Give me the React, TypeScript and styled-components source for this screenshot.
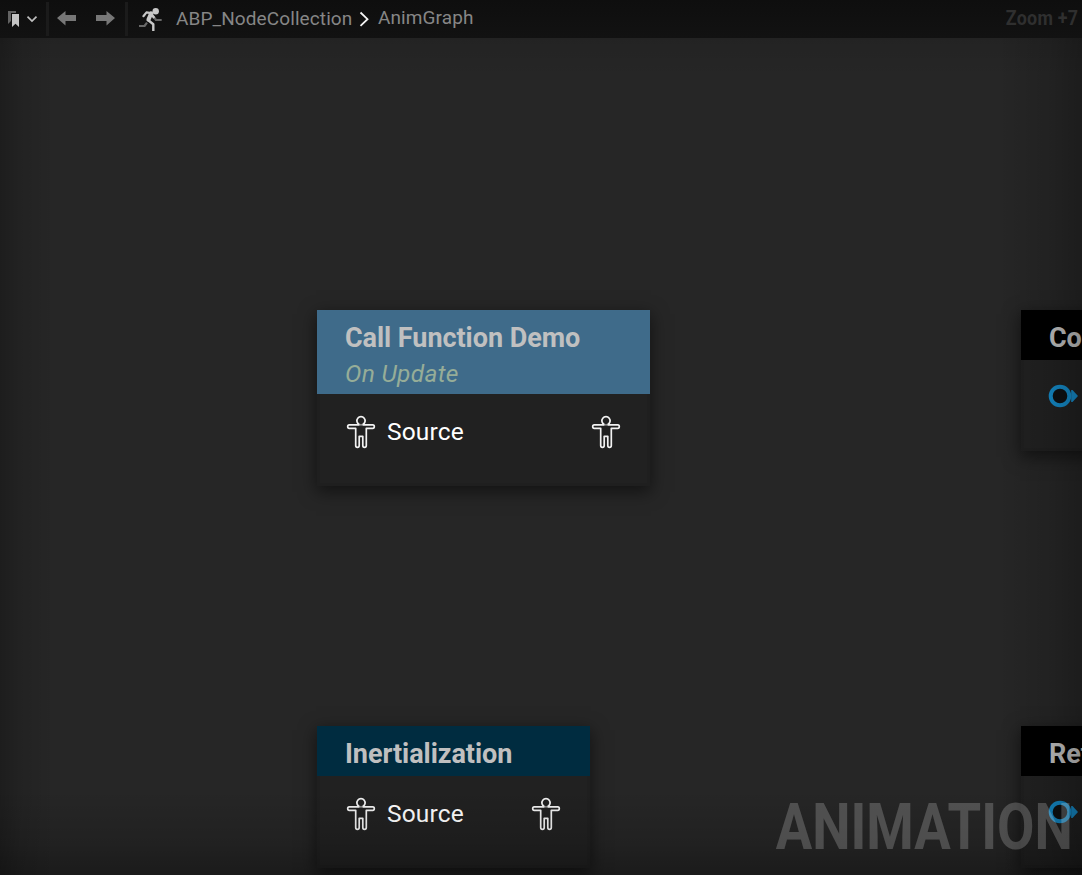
import React from "react";
import styled, { createGlobalStyle } from "styled-components";

const GlobalStyle = createGlobalStyle`
  * { box-sizing: border-box; }
  body { margin: 0; background: #262626; overflow: hidden; }
`;

const Editor = styled.div`
  position: relative;
  display: flex;
  flex-direction: column;
  width: 1082px;
  height: 875px;
  overflow: hidden;
  background: #262626;
  font-family: Roboto, "Liberation Sans", sans-serif;
`;

const TitleBar = styled.header`
  display: flex;
  align-items: center;
  height: 38px;
  flex: none;
  background: linear-gradient(#0e0e0e, #121212);
  color: #868686;
  font-size: 19px;
  line-height: 36px;
`;

const BookmarkButton = styled.div`
  display: flex;
  align-items: center;
  width: 46px;
  height: 38px;
  flex: none;
`;

const Divider = styled.div`
  width: 3px;
  height: 34px;
  flex: none;
  background: #1b1b1b;
`;

const History = styled.div`
  display: flex;
  gap: 20px;
  width: 76px;
  padding-left: 8px;
  flex: none;
`;

const Crumbs = styled.nav`
  display: flex;
  align-items: center;
  padding-left: 10px;
  height: 38px;
`;

const Crumb = styled.span<{ $width: number; $indent?: number; $lift?: number }>`
  width: ${(p) => p.$width}px;
  padding-left: ${(p) => p.$indent ?? 0}px;
  padding-bottom: ${(p) => p.$lift ?? 0}px;
  letter-spacing: 0.1px;
  white-space: nowrap;
`;

const ZoomLabel = styled.span`
  margin-left: auto;
  padding-right: 4px;
  font-weight: 700;
  font-size: 20.5px;
  line-height: 35px;
  height: 37px;
  letter-spacing: 0.3px;
  color: #2f2f2f;
  transform: scaleX(0.87);
  transform-origin: calc(100% - 4px) 50%;
`;

const Canvas = styled.main`
  position: relative;
  flex: 1;
  overflow: hidden;
`;

const Node = styled.section<{ $x: number; $y: number; $w: number; $h: number }>`
  position: absolute;
  left: ${(p) => p.$x}px;
  top: ${(p) => p.$y}px;
  width: ${(p) => p.$w}px;
  height: ${(p) => p.$h}px;
  background: #212121;
  border: 3px solid #1f1f1f;
  border-top: 0;
  box-shadow: 0 5px 16px 1px rgba(0, 0, 0, 0.5);
`;

const NodeHeader = styled.div<{ $color: string; $h: number }>`
  height: ${(p) => p.$h}px;
  margin: 0 -3px;
  padding: 10px 0 0 28px;
  background: ${(p) => p.$color};
  overflow: hidden;
  white-space: nowrap;
`;

const NodeTitle = styled.div`
  font-weight: 700;
  font-size: 27px;
  line-height: 36px;
  letter-spacing: -0.05px;
  color: #c0c0c0;
`;

const NodeSubtitle = styled.div`
  font-style: italic;
  font-size: 24.5px;
  line-height: 36px;
  letter-spacing: 0.3px;
  color: #96ad98;
`;

const PinRow = styled.div<{ $top?: number; $inset?: number }>`
  display: flex;
  align-items: center;
  height: 34px;
  margin-top: ${(p) => p.$top ?? 21}px;
  padding: 0 26px 0 ${(p) => p.$inset ?? 26}px;
`;

const PinName = styled.span`
  flex: 1;
  padding-left: 11px;
  font-size: 24.5px;
  line-height: 34px;
  letter-spacing: 0.15px;
  color: #fff;
`;

const Vignette = styled.div`
  position: absolute;
  inset: 0;
  pointer-events: none;
  background:
    linear-gradient(to right, rgba(0, 0, 0, 0.24), rgba(0, 0, 0, 0.1) 20px, transparent 55px),
    linear-gradient(to left, rgba(0, 0, 0, 0.26), rgba(0, 0, 0, 0.12) 32px, transparent 85px),
    linear-gradient(to top, rgba(0, 0, 0, 0.3), rgba(0, 0, 0, 0.13) 32px, transparent 85px),
    linear-gradient(to bottom, rgba(0, 0, 0, 0.08), transparent 40px);
`;

const Watermark = styled.div`
  position: absolute;
  right: 9px;
  bottom: 10px;
  font-weight: 700;
  font-size: 65px;
  line-height: 76px;
  color: rgba(255, 255, 255, 0.2);
  transform: scaleX(0.835);
  transform-origin: 100% 50%;
`;

const PoseIcon = () => (
  <svg width="30" height="34" viewBox="0 0 30 34" fill="none" stroke="#f2f2f2" strokeWidth="1.7" strokeLinejoin="round">
    <path d="M13.3 9.5A4.1 4.1 0 1 1 16.7 9.5" />
    <path d="M13.3 9.8H3.2C1.2 9.8 1.2 13.3 3.2 13.3H9.7V30.5C9.7 32.9 13.2 32.9 13.2 30.5V21.3H16.8V30.5C16.8 32.9 20.3 32.9 20.3 30.5V13.3H26.8C28.8 13.3 28.8 9.8 26.8 9.8H16.7" />
    <path d="M13 9.8H17" strokeOpacity=".5" />
  </svg>
);

const ValuePin = () => (
  <svg width="30" height="24" viewBox="0 0 30 24">
    <circle cx="12" cy="12" r="9.3" fill="#0e1114" stroke="#148ac8" strokeWidth="4" />
    <path d="M23.2 6L24.5 6L30 12L24.5 18H23.2Z" fill="#148ac8" />
  </svg>
);

const BookmarkIcon = () => (
  <svg width="46" height="38" viewBox="0 0 46 38" fill="none">
    <path d="M8 11H16V13H11V21L8 24Z" fill="#626262" />
    <path d="M12 14H19V27L15.5 23.7L12 27Z" fill="#c4c4c4" />
    <path d="M27.5 16.7L32 21L36.5 16.7" stroke="#c0c0c0" strokeWidth="1.7" />
  </svg>
);

const ArrowIcon = ({ flip }: { flip?: boolean }) => (
  <svg width="19" height="16" viewBox="0 0 19 16">
    <path
      transform={flip ? "matrix(-1 0 0 1 19 0)" : undefined}
      d="M0 7L8.5 0V4H19V10H8.5V14.5Z"
      fill="#777"
    />
  </svg>
);

const RunnerIcon = () => (
  <svg width="26" height="26" viewBox="0 0 26 26" fill="none" strokeLinejoin="round">
    <path d="M1 20H6.5L9 16.7M15.5 10.5L18 14H23.7" stroke="#686868" strokeWidth="2.2" />
    <path d="M5.4 10.2L8.5 6.4L13 7.2" stroke="#c8c8c8" strokeWidth="2.2" strokeLinecap="round" />
    <path d="M13.2 7.4L10.5 13.5" stroke="#c8c8c8" strokeWidth="4.2" strokeLinecap="round" />
    <path d="M10 14L15.3 18.3V25M13.5 8L16.2 12" stroke="#c8c8c8" strokeWidth="2.4" />
    <circle cx="17.7" cy="5.2" r="3.2" fill="#c8c8c8" />
  </svg>
);

const Chevron = () => (
  <svg width="26" height="20" viewBox="0 0 26 20" fill="none">
    <path d="M8.5 3.5L15.5 10.2L8.5 16.8" stroke="#f4f4f4" strokeWidth="1.8" />
  </svg>
);

export default function App() {
  return (
    <Editor>
      <GlobalStyle />
      <TitleBar>
        <BookmarkButton><BookmarkIcon /></BookmarkButton>
        <Divider />
        <History>
          <ArrowIcon />
          <ArrowIcon flip />
        </History>
        <Divider />
        <Crumbs>
          <RunnerIcon />
          <Crumb $width={188} $indent={12}>ABP_NodeCollection</Crumb>
          <Chevron />
          <Crumb $width={100} $lift={2}>AnimGraph</Crumb>
        </Crumbs>
        <ZoomLabel>Zoom +7</ZoomLabel>
      </TitleBar>
      <Canvas>
        <Node $x={317} $y={272} $w={333} $h={176}>
          <NodeHeader $color="#3f6b8a" $h={84}>
            <NodeTitle>Call Function Demo</NodeTitle>
            <NodeSubtitle>On Update</NodeSubtitle>
          </NodeHeader>
          <PinRow>
            <PoseIcon />
            <PinName>Source</PinName>
            <PoseIcon />
          </PinRow>
        </Node>
        <Node $x={1021} $y={272} $w={333} $h={141}>
          <NodeHeader $color="#000" $h={50}>
            <NodeTitle>Component To Local</NodeTitle>
          </NodeHeader>
          <PinRow $top={19} $inset={24}><ValuePin /></PinRow>
        </Node>
        <Node $x={317} $y={688} $w={273} $h={142}>
          <NodeHeader $color="#002c40" $h={50}>
            <NodeTitle>Inertialization</NodeTitle>
          </NodeHeader>
          <PinRow>
            <PoseIcon />
            <PinName>Source</PinName>
            <PoseIcon />
          </PinRow>
        </Node>
        <Node $x={1021} $y={688} $w={333} $h={142}>
          <NodeHeader $color="#000" $h={50}>
            <NodeTitle>Retarget</NodeTitle>
          </NodeHeader>
          <PinRow $top={19} $inset={24}><ValuePin /></PinRow>
        </Node>
        <Vignette />
        <Watermark>ANIMATION</Watermark>
      </Canvas>
    </Editor>
  );
}
